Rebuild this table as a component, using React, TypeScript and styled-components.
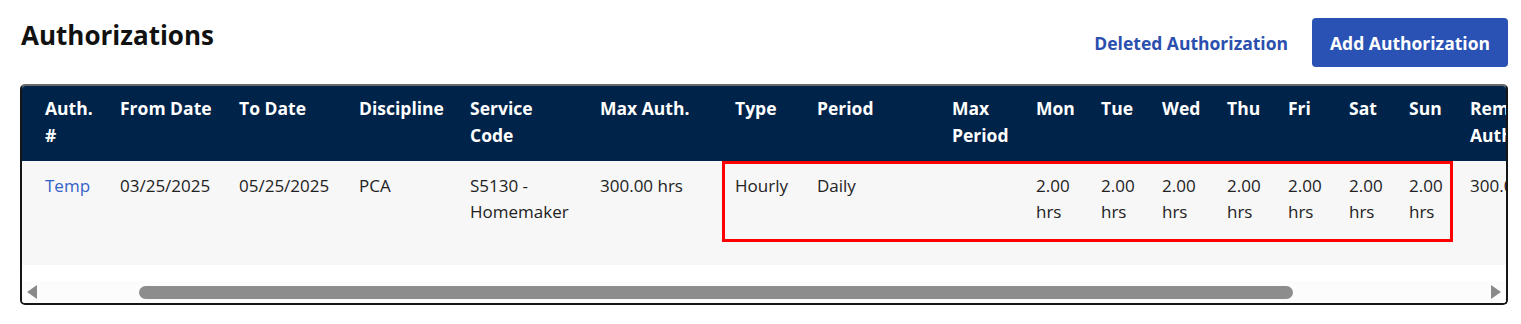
import { createGlobalStyle } from "styled-components";
import styled from "styled-components";

const GlobalStyle = createGlobalStyle`
  body {
    margin: 0;
    background: #fff;
    font-family: "Open Sans", "Noto Sans", sans-serif;
    color: #222;
  }
`;

const Page = styled.div`
  width: 1488px;
  padding: 18px 0 0 20px;
`;

const TopBar = styled.div`
  display: flex;
  align-items: flex-start;
  justify-content: space-between;
  height: 49px;
  margin-bottom: 17px;
`;

const Title = styled.h1`
  margin: 2px 0 0 1px;
  font-size: 26px;
  line-height: 31px;
  font-weight: 700;
  color: #111;
`;

const Actions = styled.div`
  display: flex;
  align-items: center;
  gap: 24px;
  height: 100%;
`;

const LinkButton = styled.a`
  font-size: 17.5px;
  font-weight: 700;
  color: #2b4fae;
  text-decoration: none;
  cursor: pointer;
`;

const PrimaryButton = styled.button`
  height: 49px;
  padding: 0 18px;
  border: none;
  border-radius: 4px;
  background: #2a52b4;
  color: #fff;
  font-family: inherit;
  font-size: 17.5px;
  font-weight: 700;
  cursor: pointer;
`;

const TableCard = styled.div`
  position: relative;
  border: 2px solid #151515;
  border-top-color: #6a6a6a;
  border-radius: 5px;
  overflow: hidden;
`;

const Table = styled.table`
  border-collapse: collapse;
  table-layout: fixed;
  width: max-content;
`;

const HeadCell = styled.th`
  background: #00234a;
  color: #fff;
  text-align: left;
  vertical-align: top;
  font-size: 17.5px;
  font-weight: 700;
  line-height: 27px;
  padding: 9px 12px 12px;
  white-space: normal;
  &:first-child {
    padding-left: 23px;
  }
`;

const Cell = styled.td<{ $link?: boolean }>`
  background: #f7f7f7;
  color: ${({ $link }) => ($link ? "#3361c9" : "#222")};
  vertical-align: top;
  font-size: 17px;
  line-height: 26px;
  height: 104px;
  box-sizing: border-box;
  padding: 12px 12px 0;
  &:first-child {
    padding-left: 23px;
  }
`;

const Highlight = styled.div`
  position: absolute;
  left: 700px;
  top: 75px;
  width: 731px;
  height: 81px;
  box-sizing: border-box;
  border: 3px solid #ff0000;
  pointer-events: none;
`;

const Scrollbar = styled.div`
  display: flex;
  align-items: center;
  height: 22px;
  margin-top: 16px;
  padding: 0 5px;
  background: #fcfcfc;
`;

const Arrow = styled.span<{ $dir: "left" | "right" }>`
  width: 0;
  height: 0;
  border-top: 7px solid transparent;
  border-bottom: 7px solid transparent;
  ${({ $dir }) =>
    $dir === "left"
      ? "border-right: 10px solid #8a8a8a;"
      : "border-left: 10px solid #8a8a8a;"}
`;

const Track = styled.div`
  flex: 1;
  display: flex;
  align-items: center;
`;

const Thumb = styled.div`
  margin-left: 102px;
  width: 1154px;
  height: 13px;
  border-radius: 7px;
  background: #8d8d8d;
`;

type Column = { label: string; width: number };

const columns: Column[] = [
  { label: "Auth. #", width: 86 },
  { label: "From Date", width: 119 },
  { label: "To Date", width: 120 },
  { label: "Discipline", width: 111 },
  { label: "Service Code", width: 130 },
  { label: "Max Auth.", width: 135 },
  { label: "Type", width: 82 },
  { label: "Period", width: 135 },
  { label: "Max Period", width: 84 },
  { label: "Mon", width: 65 },
  { label: "Tue", width: 61 },
  { label: "Wed", width: 65 },
  { label: "Thu", width: 61 },
  { label: "Fri", width: 61 },
  { label: "Sat", width: 60 },
  { label: "Sun", width: 61 },
  { label: "Remaining Auth.", width: 150 },
];

const row = [
  "Temp",
  "03/25/2025",
  "05/25/2025",
  "PCA",
  "S5130 - Homemaker",
  "300.00 hrs",
  "Hourly",
  "Daily",
  "",
  "2.00 hrs",
  "2.00 hrs",
  "2.00 hrs",
  "2.00 hrs",
  "2.00 hrs",
  "2.00 hrs",
  "2.00 hrs",
  "300.00 hrs",
];

export default function App() {
  return (
    <>
      <GlobalStyle />
      <Page>
        <TopBar>
          <Title>Authorizations</Title>
          <Actions>
            <LinkButton>Deleted Authorization</LinkButton>
            <PrimaryButton>Add Authorization</PrimaryButton>
          </Actions>
        </TopBar>

        <TableCard>
          <Table>
            <colgroup>
              {columns.map((c) => (
                <col key={c.label} style={{ width: c.width }} />
              ))}
            </colgroup>
            <thead>
              <tr>
                {columns.map((c) => (
                  <HeadCell key={c.label}>{c.label}</HeadCell>
                ))}
              </tr>
            </thead>
            <tbody>
              <tr>
                {row.map((v, i) => (
                  <Cell key={i} $link={i === 0}>
                    {v}
                  </Cell>
                ))}
              </tr>
            </tbody>
          </Table>
          <Highlight />
          <Scrollbar>
            <Arrow $dir="left" />
            <Track>
              <Thumb />
            </Track>
            <Arrow $dir="right" />
          </Scrollbar>
        </TableCard>
      </Page>
    </>
  );
}
